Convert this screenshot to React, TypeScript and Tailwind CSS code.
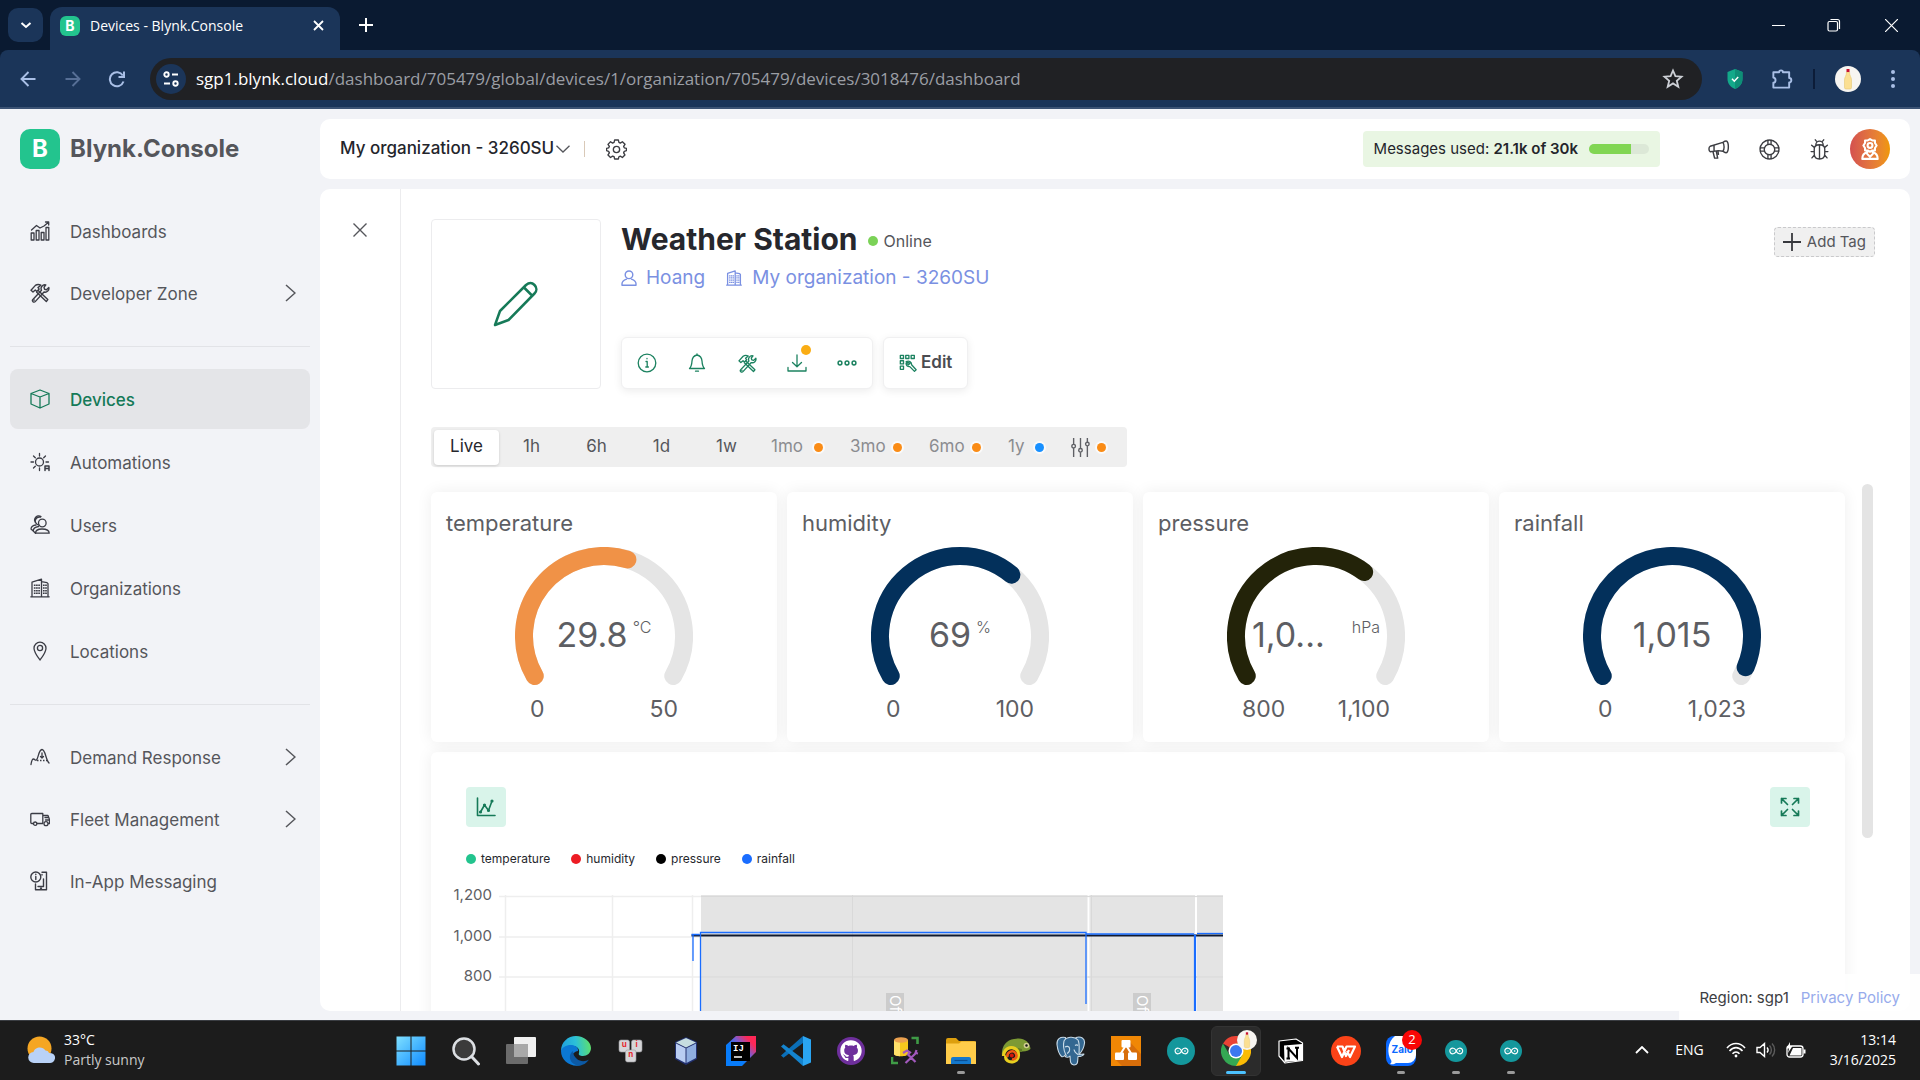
import React from "react";
import { FaGithub } from "react-icons/fa";
import { SiArduino } from "react-icons/si";

type IconProps = { className?: string; children: React.ReactNode; box?: number; stroke?: number };

function Line({ className = "size-5", children, box = 20, stroke = 1.3 }: IconProps) {
  return (
    <svg
      className={className}
      viewBox={`0 0 ${box} ${box}`}
      fill="none"
      stroke="currentColor"
      strokeWidth={stroke}
      strokeLinecap="round"
      strokeLinejoin="round"
      aria-hidden="true"
    >
      {children}
    </svg>
  );
}

const ToolsIcon = ({ className }: { className?: string }) => (
  <Line className={className} stroke={1.4}>
    <path d="M1 7.2 5.4 2.4C7 1.2 9 1.2 10.8 2.2L8 4.6l1.2 1.5-2.4 2.3L5.3 7 3 9z" />
    <path d="m8.2 7.4 9.6 9.2-1.5 1.9-9.6-9.2" />
    <path d="M18.8 4.4A3.8 3.8 0 0 1 14 9L5.2 18.6a1.5 1.5 0 0 1-2.3-2.1l8.6-9.2a3.8 3.8 0 0 1 4.3-5.4L14 4.2l.5 2 2 .5z" />
    <path d="m4 17.3.2-.2" />
  </Line>
);

const BuildingIcon = ({ className, stroke = 1.3 }: { className?: string; stroke?: number }) => (
  <Line className={className} stroke={stroke}>
    <path d="M.8 18.8h18.4M2 18.8V4.2l9.500-3v17.600M11.500 3.600 17 4.600l1 1v13.200" />
    <path strokeDasharray="1.500 1.200" strokeLinecap="butt" strokeWidth="1.700" d="M4.700 6.500V17M6.900 6.500V17M9.100 6.500V17M13.800 6.500V17M16 6.500V17" />
  </Line>
);

const DashboardsIcon = () => (
  <Line stroke={1.3}>
    <path d="M1.200 19v-7H4v7zM6.200 19V9.500H9V19zM11.200 19v-7.500H14V19zM16 19V6.500h2.800V19z" />
    <path d="m1.500 9 5-4.500 3.500 2.500 4-2L18.500 1.200M15.500 1h3.200v3" />
  </Line>
);

const CubeIcon = () => (
  <Line stroke={1.3}>
    <path d="M10 1 19 4.500v10.500L10 19l-9-4V4.500zM1 4.500 10 8l9-3.500M10 8v11" />
  </Line>
);

const AutomationsIcon = () => (
  <Line>
    <circle cx="9.500" cy="10" r="4" />
    <path d="M9.500 1.500v2.500M9.500 16v2.500M1 10h2.500M16 10h2.500M3.500 4l1.800 1.800M15.500 4l-1.800 1.800M3.500 16l1.800-1.800" />
    <path strokeWidth="1.500" d="M15 18.500v-4.500h4v4.500M15 16.500h4" />
  </Line>
);

const UsersIcon = () => (
  <Line stroke={1.3}>
    <circle cx="12.300" cy="8" r="3.800" />
    <path d="M9 10a4 4 0 1 1 1.500-7.800M6.500 8.500A4 4 0 1 1 11 1.500" />
    <path d="M19.200 18.200H5.500c0-3 2.500-4.200 6.500-4.200s7.200 1.200 7.200 4.200z" />
    <path d="M3.200 16c0-2.800 2-4 5.300-4.500M1 14c.2-2.300 2-3.700 5-4M1 14l2.200 2 2.300 2.200" />
  </Line>
);

const PinIcon = () => (
  <Line>
    <path d="M10 19C7 15 4 11.200 4 7.200a6 6 0 0 1 12 0C16 11.200 13 15 10 19z" />
    <circle cx="10" cy="7" r="2.600" />
  </Line>
);

const DemandIcon = () => (
  <Line>
    <path d="M1 17.500C1.500 14 2 12 3.500 12s1.500 1.800 3 1C8.500 11 8.500 3 12 2.500c3.500 0 3.500 10 7 13.500" />
    <path strokeDasharray="1.500 1.500" strokeLinecap="butt" d="M7 13.500h10" />
    <path d="M12 6v5M10.500 9.500 12 11l1.500-1.500" />
  </Line>
);

const FleetIcon = () => (
  <Line>
    <path d="M3.500 14.500H1.800a1 1 0 0 1-1-1v-8a1 1 0 0 1 1-1h11v10H7M12.800 6.500H18l1.500 4v4h-1" />
    <path d="M15 8.500h3.500M15.500 11h4" />
    <circle cx="5.200" cy="14.700" r="1.700" />
    <circle cx="16" cy="14.700" r="2" />
  </Line>
);

const InAppIcon = () => (
  <Line stroke={1.4}>
    <circle cx="5.800" cy="6" r="5" />
    <path d="M5.800 5.500v3M5.800 3.300v.2M12 1.200h4.500v17.600h-11V13M12 4v-.5M8 15.500h5.500V8M10.500 17.200h1" />
  </Line>
);

const Chevron = () => (
  <svg className="h-[18px] w-[11px]" viewBox="0 0 11 18" fill="none" stroke="#55565b" strokeWidth="1.500" aria-hidden="true">
    <path d="M1 1l9 8-9 8" />
  </svg>
);

type NavItem = { label: string; icon: React.ReactNode; expand?: boolean; active?: boolean };

const navGroups: { items: NavItem[]; style: string }[] = [
  {
    style: "flex flex-col gap-[2px]",
    items: [
      { label: "Dashboards", icon: <DashboardsIcon /> },
      { label: "Developer Zone", icon: <ToolsIcon className="size-5" />, expand: true },
    ],
  },
  {
    style: "mt-[23px] flex flex-col gap-[3px] border-t border-[#e2e3e7] pt-[22px]",
    items: [
      { label: "Devices", icon: <CubeIcon />, active: true },
      { label: "Automations", icon: <AutomationsIcon /> },
      { label: "Users", icon: <UsersIcon /> },
      { label: "Organizations", icon: <BuildingIcon className="size-5" /> },
      { label: "Locations", icon: <PinIcon /> },
    ],
  },
  {
    style: "mt-[23px] flex flex-col gap-[2px] border-t border-[#e2e3e7] pt-[22px]",
    items: [
      { label: "Demand Response", icon: <DemandIcon />, expand: true },
      { label: "Fleet Management", icon: <FleetIcon />, expand: true },
      { label: "In-App Messaging", icon: <InAppIcon /> },
    ],
  },
];

function TitleBar() {
  return (
    <div className="flex h-[50px] shrink-0 items-end bg-[#0a1a31] text-white">
      <button aria-label="Search tabs" className="mb-2 ml-2 flex h-[34px] w-[35px] items-center justify-center rounded-[10px] bg-[#1b3559]">
        <svg className="size-3" viewBox="0 0 12 12" fill="none" stroke="currentColor" strokeWidth="2" aria-hidden="true"><path d="m1.500 4 4.500 4 4.500-4" /></svg>
      </button>
      <div className="ml-[7px] flex h-[43px] w-[290px] items-center rounded-t-xl bg-[#1b3559] pr-3 pb-[6px] pl-[10px] font-['Open_Sans',sans-serif] text-sm">
        <span className="flex size-5 items-center justify-center rounded-md bg-[#23c48e] font-['Inter',sans-serif] text-sm font-bold">B</span>
        <span className="ml-[10px] flex-1">Devices - Blynk.Console</span>
        <button aria-label="Close tab" className="flex size-5 items-center justify-center">
          <svg className="size-[11px]" viewBox="0 0 11 11" stroke="currentColor" strokeWidth="1.800" aria-hidden="true"><path d="m1 1 9 9M10 1l-9 9" /></svg>
        </button>
      </div>
      <button aria-label="New tab" className="mb-[15px] ml-4 flex size-5 items-center justify-center">
        <svg className="size-[14px]" viewBox="0 0 14 14" stroke="currentColor" strokeWidth="2" aria-hidden="true"><path d="M7 0v14M0 7h14" /></svg>
      </button>
      <div className="ml-auto flex h-full items-center">
        <button aria-label="Minimize" className="flex h-full w-14 items-center justify-center">
          <span className="h-px w-[13px] bg-white" />
        </button>
        <button aria-label="Restore" className="flex h-full w-14 items-center justify-center">
          <svg className="size-[14px]" viewBox="0 0 14 14" fill="none" stroke="currentColor" strokeWidth="1.200" aria-hidden="true"><rect x="1" y="3.500" width="9.500" height="9.500" rx="1.500" /><path d="M3.500 1.500h7a2 2 0 0 1 2 2V11" /></svg>
        </button>
        <button aria-label="Close" className="flex h-full w-[58px] items-center justify-center">
          <svg className="size-[13px]" viewBox="0 0 13 13" stroke="currentColor" strokeWidth="1.200" aria-hidden="true"><path d="m0 0 13 13M13 0 0 13" /></svg>
        </button>
      </div>
    </div>
  );
}

const Bottle = ({ className }: { className?: string }) => (
  <svg className={className} viewBox="0 0 26 26" aria-hidden="true">
    <circle cx="13" cy="13" r="13" fill="#f7f5f1" />
    <path d="M11.500 6h3c0 4 2 5 2 8v7.500a1.500 1.500 0 0 1-1.500 1.500h-4a1.500 1.500 0 0 1-1.500-1.500V14c0-3 2-4 2-8z" fill="#fbdf92" stroke="#e6c873" strokeWidth=".6" />
    <rect x="11.500" y="3" width="3" height="3" fill="#c8102e" />
  </svg>
);

function AddressBar() {
  return (
    <div className="flex h-[59px] shrink-0 items-center rounded-t-lg border-b-2 border-[#3c5374] bg-[#1b3559] text-[#a9bfe6]">
      <button aria-label="Back" className="ml-4 flex size-6 items-center justify-center">
        <svg className="size-4" viewBox="0 0 16 16" fill="none" stroke="currentColor" strokeWidth="1.900" aria-hidden="true"><path d="M15.500 8h-14M8.500 1 1.500 8l7 7" /></svg>
      </button>
      <button aria-label="Forward" className="ml-[21px] flex size-6 items-center justify-center text-[#576f96]">
        <svg className="size-4" viewBox="0 0 16 16" fill="none" stroke="currentColor" strokeWidth="1.900" aria-hidden="true"><path d="M.5 8h14M7.500 1l7 7-7 7" /></svg>
      </button>
      <button aria-label="Reload" className="ml-5 flex size-6 items-center justify-center">
        <svg className="size-[18px]" viewBox="0 0 18 18" fill="none" stroke="currentColor" strokeWidth="2" aria-hidden="true"><path d="M15.500 11.500a7 7 0 1 1-.7-6M16 1.500V7h-5.500" /></svg>
      </button>
      <div className="ml-[21px] flex h-[42px] flex-1 items-center rounded-full bg-[#202124] pr-[18px] pl-[6px] font-['Open_Sans',sans-serif] text-[17px]">
        <button aria-label="Site information" className="flex size-[30px] items-center justify-center rounded-full bg-[#1b3559] text-white">
          <svg className="size-4" viewBox="0 0 16 16" fill="none" stroke="currentColor" strokeWidth="1.900" aria-hidden="true"><circle cx="3.500" cy="3.500" r="2.200" /><path d="M9 3.500h6M1 12.500h6" /><circle cx="12.500" cy="12.500" r="2.200" /></svg>
        </button>
        <span className="ml-[10px] flex-1 text-[#9b9ea4]">
          <span className="text-white">sgp1.blynk.cloud</span>/dashboard/705479/global/devices/1/organization/705479/devices/3018476/dashboard
        </span>
        <button aria-label="Bookmark">
          <svg className="size-[22px]" viewBox="0 0 22 22" fill="none" stroke="#cdd0d6" strokeWidth="1.800" aria-hidden="true"><path d="m11 2.500 2.400 5.700 6.100.5-4.700 4 1.500 6-5.300-3.300-5.300 3.300 1.500-6-4.700-4 6.100-.5z" /></svg>
        </button>
      </div>
      <button aria-label="Security extension" className="ml-[23px]">
        <svg className="h-5 w-5" viewBox="0 0 20 20" aria-hidden="true"><path d="m10 0 7.500 3v7c0 5-3.500 8.500-7.500 10-4-1.500-7.500-5-7.500-10V3z" fill="#13a98a" /><path d="m10 0 7.500 3v7c0 5-3.500 8.500-7.500 10z" fill="#0e8f77" /><path d="m7 9.800 2.300 2.400L13.200 8" fill="none" stroke="#fff" strokeWidth="1.500" /></svg>
      </button>
      <button aria-label="Extensions" className="ml-[25px]">
        <svg className="size-[23px]" viewBox="0 0 24 24" fill="none" stroke="currentColor" strokeWidth="2" strokeLinejoin="round" aria-hidden="true"><path d="M3.500 5.500h6a2 2 0 1 1 4 0h6.500v6a2 2 0 1 1 0 4.500v5.500H3.500v-5a2.800 2.800 0 0 0 0-5.500z" /></svg>
      </button>
      <span className="ml-5 h-5 w-[2px] bg-[#0c1c38]" />
      <button aria-label="Profile" className="ml-5"><Bottle className="size-[26px]" /></button>
      <button aria-label="Menu" className="mr-[15px] ml-5 flex w-6 flex-col items-center gap-[3px]">
        <span className="size-1 rounded-full bg-current" />
        <span className="size-1 rounded-full bg-current" />
        <span className="size-1 rounded-full bg-current" />
      </button>
    </div>
  );
}

function Sidebar() {
  return (
    <aside className="flex w-80 shrink-0 flex-col px-[10px] pt-5 text-[17px] text-[#55565b]">
      <a href="#home" className="ml-[10px] flex items-center gap-[10px]">
        <span className="flex size-10 items-center justify-center rounded-[10px] bg-[#23c48e] text-2xl font-bold text-white">B</span>
        <span className="text-2xl font-bold">Blynk.Console</span>
      </a>
      <nav className="mt-8 flex flex-col">
        {navGroups.map((group, i) => (
          <div key={i} className={group.style}>
            {group.items.map((item) => (
              <a
                key={item.label}
                href={"#" + item.label}
                className={
                  item.active
                    ? "flex h-[60px] items-center rounded-lg bg-[#e4e5e8] px-5 font-medium text-[#157a58]"
                    : "flex h-[60px] items-center rounded-lg pr-[14px] pl-5"
                }
              >
                <span className={item.active ? "text-[#157a58]" : "text-[#3b3c45]"}>{item.icon}</span>
                <span className="ml-5 flex-1 pt-[3px]">{item.label}</span>
                {item.expand && <Chevron />}
              </a>
            ))}
          </div>
        ))}
      </nav>
    </aside>
  );
}

function TopBar() {
  return (
    <header className="flex h-[60px] shrink-0 items-center rounded-[10px] bg-white px-5 text-[#24252b]">
      <button className="flex items-center text-[17px] font-medium">
        My organization - 3260SU
        <svg className="ml-[2px] h-2 w-[14px]" viewBox="0 0 14 8" fill="none" stroke="#55565b" strokeWidth="1.300" aria-hidden="true"><path d="m.5.800 6.500 6.200L13.500.8" /></svg>
      </button>
      <span className="ml-[14px] h-4 w-px bg-[#d9c9b8]" />
      <button aria-label="Settings" className="ml-[21px] text-[#3c3d42]">
        <Line className="size-[21px]">
          <circle cx="10" cy="10" r="3" />
          <path d="M8.200 1h3.600l.5 2.300 1.300.6 2-1.300 2.500 2.500-1.300 2 .6 1.300 2.100.5v2.200l-2.100.7-.6 1.400 1.200 2-2.400 2.400-2-1.300-1.300.6-.5 2.100H8.200l-.5-2.100-1.400-.6-2 1.300-2.400-2.400 1.300-2-.7-1.400L.5 11.100V8.900l2-.5.700-1.300-1.300-2 2.400-2.500 2 1.300 1.400-.6z" />
        </Line>
      </button>
      <div className="ml-auto flex h-9 items-center rounded bg-[#e9f6e3] px-[11px] text-[15px]">
        <span>Messages used: <span className="font-semibold">21.1k of 30k</span></span>
        <span className="ml-[11px] h-[10px] w-[60px] overflow-hidden rounded-full bg-[#dce8d7]">
          <span className="block h-full w-[70%] bg-[#81d653]" />
        </span>
      </div>
      <div className="ml-12 flex items-center gap-[29px] text-[#3c3d42]">
        <button aria-label="Announcements">
          <Line className="size-[22px]"><path d="M2 7.500 13.500 4c1.500-1 2.200-1.500 3.500-1.200 2 1.500 2 9 0 10.500-1.300.5-2-.4-3.500-1.300L9.500 11.500 2 12.500c-1.500-1-1.500-4 0-5zM4.500 12.300l1.500 6h2.800L7.500 12M9 11.800l.5 3M13.500 4c1.500 2 1.500 6.500 0 8M5.500 6.500v5.500" /></Line>
        </button>
        <button aria-label="Support">
          <Line className="size-[21px]"><circle cx="10" cy="10" r="9" /><circle cx="10" cy="10" r="5" /><path d="M8.500 1.200v4M11.500 1.200v4M8.500 14.800v4M11.500 14.800v4M1.200 8.500h4M1.200 11.500h4M14.800 8.500h4M14.800 11.500h4" /></Line>
        </button>
        <button aria-label="Report a bug">
          <Line className="size-[21px]"><path d="M6.500 5.500a3.500 3.500 0 0 1 7 0M5 9.500C5 7 6.500 5.500 10 5.500S15 7 15 9.500V14c0 3-2 5-5 5s-5-2-5-5zM10 5.500V19M5 8 2.500 6M15 8l2.500-2M5 12H2M15 12h3M5 15.500 2.800 18M15 15.500l2.200 2.500M7 2 6 .8M13 2l1-1.200" /></Line>
        </button>
        <button aria-label="Account" className="-ml-[9px] flex size-10 items-center justify-center rounded-full bg-linear-to-r from-[#d4504f] to-[#f09800] text-white">
          <Line className="size-[22px]" stroke={1.9}><circle cx="10" cy="6.800" r="2.200" /><path d="M10 1 12 2.200h2.500v2.300L16 6.800l-1.500 2.300v2.300H12L10 12.500 8 11.400H5.500V9.100L4 6.800l1.500-2.300V2.200H8zM3 19c0-4 2.500-5.500 4.500-6M17 19c0-4-2.500-5.500-4.500-6M3 19h14M7.500 14.500 10 17l2.500-2.500" /></Line>
        </button>
      </div>
    </header>
  );
}

function DeviceHeader() {
  return (
    <section className="flex items-start pr-[35px] pl-[30px]">
      <button aria-label="Edit picture" className="flex size-[170px] items-center justify-center rounded-[4px] border border-[#ececee] text-[#167a58]">
        <svg className="size-[46px]" viewBox="0 0 46 46" fill="none" stroke="currentColor" strokeWidth="2.500" strokeLinejoin="round" aria-hidden="true">
          <path d="m2 44 5-14L33 4c3-2.500 6-2.500 8.500 0s2.500 6 0 8.500L15.500 39zM31 6.500 39.500 15" />
        </svg>
      </button>
      <div className="ml-5 flex h-[170px] flex-col">
        <div className="flex h-10 items-center">
          <h1 className="text-[30px] font-bold text-[#26272d]">Weather Station</h1>
          <span className="mt-1 ml-[10px] size-[10px] rounded-full bg-[#7bd257]" />
          <span className="mt-1 ml-[6px] text-base text-[#55565b]">Online</span>
        </div>
        <div className="mt-[5px] flex items-center text-[19px] leading-7 text-[#7a90e2]">
          <Line className="size-4" box={16} stroke={1.4}><circle cx="8" cy="4.800" r="3.800" /><path d="M1 15.200v-1.500c0-2.500 2-3.500 4.500-4.500M15 15.200v-1.500c0-2.500-2-3.500-4.500-4.500M1 15.200h14" /></Line>
          <a href="#owner" className="ml-[9px]">Hoang</a>
          <BuildingIcon className="ml-[21px] size-4" stroke={1.6} />
          <a href="#organization" className="ml-[10px]">My organization - 3260SU</a>
        </div>
        <div className="mt-auto flex gap-[10px]">
          <div className="flex h-[52px] items-center gap-[10px] rounded-md border border-[#f0f0f1] bg-white px-[5px] text-[#1c8260] shadow-[0_2px_8px_rgba(0,0,0,0.08)]">
            <button aria-label="Info" className="flex size-10 items-center justify-center">
              <Line><circle cx="10" cy="10" r="8.800" /><path d="M9 8.500h1.200v5.500M8.800 14h2.600M10 5.500v.3" /></Line>
            </button>
            <button aria-label="Notifications" className="flex size-10 items-center justify-center">
              <Line><path d="M2.500 15.500h15c-2-2-2.300-4-2.500-7.500-.2-3-1.500-5.200-5-6-3.500.8-4.800 3-5 6-.2 3.500-.5 5.500-2.500 7.500zM8.500 18.200h3M10 .800V2" /></Line>
            </button>
            <button aria-label="Developer tools" className="flex size-10 items-center justify-center"><ToolsIcon className="size-[19px]" /></button>
            <button aria-label="Download" className="relative flex size-10 items-center justify-center">
              <Line><path d="M10 2v11.500M5.500 9.500l4.500 4.300 4.500-4.300M1 14.500V18h18v-3.500" /></Line>
              <span className="absolute top-[2px] right-[6px] size-[10px] rounded-full bg-[#faad14]" />
            </button>
            <button aria-label="More" className="flex size-10 items-center justify-center">
              <Line stroke={1.5}><circle cx="3" cy="10" r="1.900" /><circle cx="10" cy="10" r="1.900" /><circle cx="17" cy="10" r="1.900" /></Line>
            </button>
          </div>
          <button className="flex h-[52px] items-center rounded-md border border-[#f0f0f1] bg-white px-[15px] text-[#4b4c51] shadow-[0_2px_8px_rgba(0,0,0,0.08)]">
            <span className="text-[#1c8260]">
              <Line className="size-[18px]" stroke={1.5}><path d="M1.500 1.500h3.500V5H1.500zM7.500 1.500H11V5H7.500zM13.500 1.500H17V5h-3.500zM1.500 7.500h3.500V11H1.500zM1.500 13.500h3.500V17H1.500zM8 8.500c3-1.500 6 0 6 3.500l5 5.500-1.800 1.800-5.200-5.300c-2.500.3-4.500-1.500-4-4l2.500 2 1.500-1.500z" /></Line>
            </span>
            <span className="ml-1 text-[17px] font-semibold">Edit</span>
          </button>
        </div>
      </div>
      <button className="mt-2 ml-auto flex h-[30px] items-center rounded border border-dashed border-[#c9c9cb] bg-[#f0f0f0] px-2 text-[15px] text-[#55565b]">
        <svg className="mr-[6px] size-[18px]" viewBox="0 0 18 18" stroke="#37383d" strokeWidth="1.800" aria-hidden="true"><path d="M9 0v18M0 9h18" /></svg>
        Add Tag
      </button>
    </section>
  );
}

const lockedRanges = [
  { label: "1mo", text: "w-[37px] text-left", dot: "size-[9px] rounded-full bg-[#fa8c16] ring-2 ring-white/70" },
  { label: "3mo", text: "w-[37px] text-left", dot: "size-[9px] rounded-full bg-[#fa8c16] ring-2 ring-white/70" },
  { label: "6mo", text: "w-[37px] text-left", dot: "size-[9px] rounded-full bg-[#fa8c16] ring-2 ring-white/70" },
  { label: "1y", text: "w-[21px] text-left", dot: "size-[9px] rounded-full bg-[#1890ff] ring-2 ring-white/70" },
];

function RangeBar() {
  return (
    <div className="mt-[38px] ml-[30px] flex h-10 w-fit items-center rounded bg-[#efefef] pr-[21px] pl-[3px] text-[17px] text-[#55565b]">
      <button className="h-[35px] w-[65px] rounded bg-white text-[#26272d] shadow-[0_1px_3px_rgba(0,0,0,0.15)]">Live</button>
      {["1h", "6h", "1d", "1w"].map((r) => (
        <button key={r} className="h-[35px] w-[65px]">{r}</button>
      ))}
      <div className="ml-3 flex items-center gap-[27px] text-[#8b8c90]">
        {lockedRanges.map((r) => (
          <button key={r.label} className="flex items-center gap-[6px]">
            <span className={r.text}>{r.label}</span>
            <span className={r.dot} />
          </button>
        ))}
        <button aria-label="Custom range" className="flex items-center gap-[7px]">
          <svg className="size-[19px]" viewBox="0 0 18 18" fill="none" stroke="#5f6065" strokeWidth="1.300" aria-hidden="true">
            <path d="M2.500 0v6M2.500 9.500V18M9 0v10M9 13.500V18M15.500 0v4M15.500 7.500V18" />
            <circle cx="2.500" cy="7.700" r="1.700" /><circle cx="9" cy="11.700" r="1.700" /><circle cx="15.500" cy="5.700" r="1.700" />
          </svg>
          <span className="size-[9px] rounded-full bg-[#fa8c16] ring-2 ring-white/70" />
        </button>
      </div>
    </div>
  );
}

function arc(sweep: number) {
  const c = 89;
  const r = 80;
  const point = (deg: number) => {
    const a = (deg * Math.PI) / 180;
    return `${(c + r * Math.cos(a)).toFixed(2)} ${(c + r * Math.sin(a)).toFixed(2)}`;
  };
  return `M${point(150)}A${r} ${r} 0 ${sweep > 180 ? 1 : 0} 1 ${point(150 + sweep)}`;
}

type Gauge = { name: string; value: string; unit?: string; min: string; max: string; color: string; sweep: number; clipped?: boolean };

const gauges: Gauge[] = [
  { name: "temperature", value: "29.8", unit: "°C", min: "0", max: "50", color: "#f09247", sweep: 137 },
  { name: "humidity", value: "69", unit: "%", min: "0", max: "100", color: "#03305b", sweep: 160 },
  { name: "pressure", value: "1,0...", unit: "hPa", min: "800", max: "1,100", color: "#232309", sweep: 157, clipped: true },
  { name: "rainfall", value: "1,015", min: "0", max: "1,023", color: "#03305b", sweep: 233 },
];

function GaugeCard({ g }: { g: Gauge }) {
  return (
    <article className="flex h-[250px] flex-col items-center rounded-md bg-white px-[15px] pt-[15px] text-[#5d5e63] shadow-[0_0_16px_rgba(0,0,0,0.07)]">
      <h2 className="w-full text-[22px] leading-8">{g.name}</h2>
      <div className="relative mt-2 h-[140px] w-[178px]">
        <svg className="h-[140px] w-[178px]" viewBox="0 0 178 140" fill="none" strokeWidth="18" strokeLinecap="round" aria-hidden="true">
          <path d={arc(240)} stroke="#e5e5e5" />
          <path d={arc(g.sweep)} stroke={g.color} />
        </svg>
        <div className={g.clipped ? "absolute inset-x-[25px] top-[68px] flex items-start justify-between" : "absolute inset-x-0 top-[68px] flex items-start justify-center gap-[5px]"}>
          <span className="text-[34px] leading-[40px]">{g.value}</span>
          {g.unit && <span className="text-base leading-6 font-light">{g.unit}</span>}
        </div>
      </div>
      <div className="mt-[6px] flex w-[148px] justify-between text-[23px] leading-8">
        <span>{g.min}</span>
        <span>{g.max}</span>
      </div>
    </article>
  );
}

const series = [
  { name: "temperature", dot: "size-[10px] rounded-full bg-[#23c48e]" },
  { name: "humidity", dot: "size-[10px] rounded-full bg-[#ed1c24]" },
  { name: "pressure", dot: "size-[10px] rounded-full bg-black" },
  { name: "rainfall", dot: "size-[10px] rounded-full bg-[#1a6dff]" },
];

function HistoryChart() {
  return (
    <svg className="mt-[11px] block h-[200px] w-[800px]" viewBox="0 0 800 200" role="img" aria-label="Sensor history">
      <g stroke="#eeeeee" strokeWidth="1.500">
        <path d="M68 16.500h724M68 57h724M68 97h724" />
        <path d="M74.500 15v185M181.500 15v185M261.500 15v185" />
      </g>
      <g fill="#e4e4e4">
        <rect x="270" y="15" width="386.500" height="185" />
        <rect x="658.500" y="15" width="105.500" height="185" />
        <rect x="766" y="15" width="26" height="185" />
      </g>
      <path d="M421.500 15v185M660.500 15v185M270 16.500h522M270 97h522" stroke="#d9d9d9" />
      <g fill="#5d5e63" fontSize="15" fontFamily="Inter, sans-serif" textAnchor="end">
        <text x="61" y="20">1,200</text>
        <text x="61" y="61">1,000</text>
        <text x="61" y="101">800</text>
      </g>
      <path d="M260.500 55.500H792" stroke="#101a30" strokeWidth="2" />
      <g fill="none" stroke="#1a6dff">
        <path d="M260.500 54.500h8M262 54v27M269.500 200V52.500H655V124M655 52v2h108" strokeWidth="1.300" />
        <path d="M764 54.500V200" strokeWidth="2.200" />
        <path d="M766 53.500h26" strokeWidth="1.300" />
      </g>
      {[455, 702].map((x) => (
        <g key={x}>
          <rect x={x} y="113" width="18" height="60" fill="#cccccc" />
          <text transform={`translate(${x + 4} 115) rotate(90)`} fill="#fff" fontSize="15" fontFamily="Inter, sans-serif">Offline</text>
        </g>
      ))}
    </svg>
  );
}

function ChartCard() {
  return (
    <article className="mt-[10px] rounded-md bg-white pt-[35px] shadow-[0_0_16px_rgba(0,0,0,0.07)]">
      <div className="flex justify-between px-[35px] text-[#167a58]">
        <button aria-label="Chart type" className="flex size-10 items-center justify-center rounded bg-[#d9f4ea]">
          <Line stroke={1.6}><path d="M1.500 1v17.500H19M4.500 15 8.500 8l4 5.500L16 4" /><circle cx="4.500" cy="15" r=".8" /><circle cx="8.500" cy="8" r=".8" /><circle cx="12.500" cy="13.500" r=".8" /><circle cx="16" cy="4" r=".8" /></Line>
        </button>
        <button aria-label="Full screen" className="flex size-10 items-center justify-center rounded bg-[#d9f4ea]">
          <Line stroke={1.7}><path d="M1.500 6V1.500H6M1.500 1.500l6 6M14 1.500h4.500V6M18.500 1.500l-6 6M1.500 14v4.500H6M1.500 18.500l6-6M18.500 14v4.500H14M18.500 18.500l-6-6" /></Line>
        </button>
      </div>
      <ul className="mt-[22px] flex h-5 items-center gap-[21px] pl-[35px] text-xs text-[#26272d]">
        {series.map((s) => (
          <li key={s.name} className="flex items-center gap-[5px]">
            <span className={s.dot} />
            {s.name}
          </li>
        ))}
      </ul>
      <HistoryChart />
    </article>
  );
}

function Main() {
  return (
    <main className="relative flex min-w-0 flex-1 flex-col gap-[10px] pt-[10px] pr-[10px] pb-[9px]">
      <TopBar />
      <div className="flex min-h-0 flex-1 overflow-hidden rounded-[10px] bg-white">
        <div className="flex w-[81px] shrink-0 justify-center border-r border-[#ececee] pt-[33px]">
          <button aria-label="Close device" className="h-4">
            <svg className="size-[14px]" viewBox="0 0 14 14" stroke="#55565b" strokeWidth="1.400" aria-hidden="true"><path d="m.5.5 13 13M13.500.5l-13 13" /></svg>
          </button>
        </div>
        <div className="flex min-w-0 flex-1 flex-col pt-[30px]">
          <DeviceHeader />
          <RangeBar />
          <div className="mt-2 flex min-h-0 flex-1">
            <div className="min-w-0 flex-1 overflow-hidden pt-[17px] pr-[17px] pl-[30px]">
              <div className="grid grid-cols-4 gap-[10px]">
                {gauges.map((g) => <GaugeCard key={g.name} g={g} />)}
              </div>
              <ChartCard />
            </div>
            <div className="mt-[9px] mr-[37px] h-[66%] w-[11px] rounded-full bg-[#e4e4e4]" />
          </div>
        </div>
      </div>
      <footer className="absolute right-0 bottom-0 flex h-[46px] gap-3 bg-white/90 pt-[13px] pr-5 pl-5 text-[15px] text-[#3c3d42]">
        <span>Region: sgp1</span>
        <a href="#privacy" className="text-[#97abec]">Privacy Policy</a>
      </footer>
    </main>
  );
}

const Arduino = ({ className }: { className: string }) => (
  <span className={className}><SiArduino className="w-3/4" /></span>
);

const ChromeLogo = () => (
  <svg className="size-[30px]" viewBox="0 0 30 30" aria-hidden="true">
    <path d="M15 15 2 7.500A15 15 0 0 1 28 7.500H15z" fill="#ea4335" />
    <path d="M15 15 15 7.500H28A15 15 0 0 1 15 30z" fill="#fbbc05" />
    <path d="M15 15 21.500 18.700 15 30A15 15 0 0 1 2 7.500L8.500 18.700z" fill="#34a853" />
    <circle cx="15" cy="15" r="7.500" fill="#fff" />
    <circle cx="15" cy="15" r="6" fill="#3b78f0" />
  </svg>
);

type TaskbarApp = { name: string; icon: React.ReactNode; mark?: "open" | "active" };

const apps: TaskbarApp[] = [
  { name: "Start", icon: <svg className="size-[30px]" viewBox="0 0 30 30"><defs><linearGradient id="win" x1="0" y1="0" x2="1" y2="1"><stop offset="0" stopColor="#7fe0ff" /><stop offset="1" stopColor="#0f8bff" /></linearGradient></defs><path fill="url(#win)" d="M.5.5h14v14H.5zM15.500.5h14v14h-14zM.5 15.500h14v14H.5zM15.500 15.500h14v14h-14z" /></svg> },
  { name: "Search", icon: <svg className="size-[30px]" viewBox="0 0 30 30" fill="#3b3b3b" stroke="#dcdfe3" strokeWidth="2.500"><circle cx="13" cy="13" r="10.500" /><path d="m20.500 20.500 7 7.500" strokeLinecap="round" strokeWidth="3" /></svg> },
  { name: "Task View", icon: <svg className="size-[30px]" viewBox="0 0 30 30"><rect x="8" y="1" width="22" height="20" rx="1" fill="#f0f0f0" /><rect x="0" y="8" width="22" height="20" rx="1" fill="#6b6b6b" /><rect x="8" y="8" width="14" height="13" fill="#a9a9a9" /></svg> },
  { name: "Edge", icon: <svg className="size-[30px]" viewBox="0 0 30 30"><defs><linearGradient id="edge" x1="0" y1=".5" x2="1" y2=".4"><stop offset="0" stopColor="#1f9fdd" /><stop offset=".5" stopColor="#2cc0d8" /><stop offset="1" stopColor="#5fe06a" /></linearGradient></defs><path d="M0 15C0 6 7 0 15 0s15 6 15 12c0 5-4 8-8 8-3 0-5-1-4-3 1-4-2-7-6-7-6 0-9 3-12 5z" fill="url(#edge)" /><path d="M0 15c1-4 6-6.500 11-6 4 .5 6.500 3 6 6-5 1-8 5-5 10 2 3 5 4.500 9 4C10 32 0 25 0 15z" fill="#0b78d4" /><path d="M12 15c-4 3-4 8-1 11.500 5 5 13 3.500 17-3-4 2.500-9 2-12-.5-2.500-2-4-5-4-8z" fill="#0c59a4" /></svg> },
  { name: "UniKey", icon: <svg className="size-[30px]" viewBox="0 0 30 30"><g fill="#d5d5d8" stroke="#9a9a9e" strokeWidth=".6"><rect x="3" y="4" width="10.500" height="12" rx="2" /><rect x="15.500" y="4" width="10.500" height="12" rx="2" /><rect x="9.500" y="14" width="10.500" height="12" rx="2" /></g><g fill="#e5272c" fontSize="8" fontWeight="700" fontFamily="Inter, sans-serif" textAnchor="middle"><text x="8.200" y="11">u</text><text x="20.700" y="11">i</text><text x="14.700" y="21">n</text></g></svg> },
  { name: "VirtualBox", icon: <svg className="size-[30px]" viewBox="0 0 30 30"><path d="m15 1 11 5v17l-11 6-11-6V6z" fill="#22306e" /><path d="m15 2 10 4.500-10 5-10-5z" fill="#c6dde0" /><path d="m5 7.500 9.500 4.800V27L5 22z" fill="#b9cdf2" /><path d="m25 7.500-9.500 4.800V27l9.500-5z" fill="#8faee0" /></svg> },
  { name: "IntelliJ IDEA", icon: <svg className="size-[30px]" viewBox="0 0 30 30"><defs><linearGradient id="ij" x1=".1" y1=".8" x2=".9" y2=".1"><stop offset=".3" stopColor="#087cfa" /><stop offset=".6" stopColor="#7b5bd0" /><stop offset=".9" stopColor="#fe2857" /></linearGradient></defs><path d="M10 0h20v16L16 30H0V9z" fill="url(#ij)" /><rect x="5" y="6" width="19" height="19" fill="#000" /><path d="M8 21h8" stroke="#fff" strokeWidth="1.500" /><text x="7" y="15" fill="#fff" fontSize="9" fontWeight="700" fontFamily="'Liberation Mono', monospace">IJ</text></svg> },
  { name: "Visual Studio Code", icon: <svg className="size-[30px]" viewBox="0 0 30 30"><path d="m0 19.500 2.500 2.200L22 7V0z" fill="#0b6fb8" /><path d="M0 10.500 2.500 8.300 22 23v7z" fill="#1484cf" /><path d="m22 0 8 3.500v23L22 30z" fill="#2aa5f2" /></svg> },
  { name: "GitHub Desktop", icon: <span className="flex size-7 items-center justify-center rounded-full bg-[#6e2f9c] text-white"><FaGithub className="size-[22px]" /></span> },
  { name: "Database tools", icon: <svg className="size-[30px]" viewBox="0 0 30 30"><path d="M3 4v14c0 3 14 3 14 0V4z" fill="#f7c91d" /><path d="M3 4v14c0 1.200 2.500 2 6 2.200V4z" fill="#ffe06a" /><ellipse cx="10" cy="4" rx="7" ry="2.800" fill="#eba14f" /><path d="M20.500 2h6v6M1 21v6h6" fill="none" stroke="#3f9b46" strokeWidth="2.600" /><path d="m12 17 4-2.500 3 2-2 2 7.500 7.500M25.500 14l-1 3 2.500.5M24.500 17.500 14.500 27" fill="none" stroke="#a259bd" strokeWidth="2.200" /></svg> },
  { name: "File Explorer", icon: <svg className="size-[30px]" viewBox="0 0 30 30"><path d="M0 4a2 2 0 0 1 2-2h8l3 3h15a2 2 0 0 1 2 2v3H0z" fill="#dd9f0e" /><path d="M0 7.500h13l2.500-2H30V28H0z" fill="#ffcc4a" /><path d="M5 28v-5a2 2 0 0 1 2-2h16a2 2 0 0 1 2 2v5z" fill="#1478cc" /><path d="M8.500 24.500h13" stroke="#0a4f94" strokeWidth="1.200" /></svg>, mark: "open" },
  { name: "Chameleon", icon: <svg className="size-[30px]" viewBox="0 0 30 30"><path d="M1 20C0 11 5 4 13 3c5-1 9-1 13 2.500 2 2.500 3.500 5.500 3.500 7.500-3 2.500-7 2.500-11 2.500L9 12z" fill="#7c9a34" /><path d="M17 12v4h4v-3z" fill="#5f7c26" /><path d="M2.500 20C3 13 9 10 14 12.500c5 3 4.500 11-1 13C8 27 3.500 24 5 19.500" fill="none" stroke="#e8cf1f" strokeWidth="3.200" /><path d="M6.500 21c-1-5 5-7.500 8-4 2.500 3.500-.5 7-3.500 6" fill="none" stroke="#ef5a14" strokeWidth="2.600" /><circle cx="10.800" cy="19.500" r="2" fill="#d3160c" /><circle cx="25.500" cy="9.500" r="2.800" fill="#d2cf92" /><circle cx="25.500" cy="9.500" r="1.200" fill="#1c1c1c" /></svg> },
  { name: "PostgreSQL", icon: <svg className="size-[30px]" viewBox="0 0 30 30" fill="#336791" stroke="#c9dbe8" strokeWidth="1.100" strokeLinejoin="round"><path d="M9.500 1.500C4 .500.5 3 1 8.500c.5 4.500 2 9.500 4.500 12 1.500 1 3-.5 5-3z" /><path d="M20 1.500c5-1.500 9 1 8.500 5.500-.5 5-3 9-5.500 11.500l-3-1z" /><path d="M9.500 18c-2-4.500-2.500-9-1.500-13C10 1 18-.5 22 4c2 4 1 9 1 14.500l5-.5c-1 2-3.500 2.500-6 2.500-.5 4 .5 8.500-4 8.500-4.500-.5-3.500-5-4-9-1 1.500-3.500 1.500-5 .5 1.500-.5 1.500-1 .5-2.500z" /><path d="M9 11c1.500-1 4-1 4.500 1 .5 3-.5 4.500-2.500 5.500M19 9.500c1-.8 2.200-.8 3 0M18 13.500c.5 2.500 2 4 4.500 5.500" fill="none" /></svg> },
  { name: "draw.io", icon: <svg className="size-[30px]" viewBox="0 0 30 30"><rect width="30" height="30" fill="#f08705" /><path d="m18 5 12 13v12H11l-6-6z" fill="#d86e0a" /><path d="M15 9 9 19M15 9l6 10" stroke="#fff" strokeWidth="2" /><g fill="#fff"><rect x="10.500" y="4" width="9" height="7.500" rx="1" /><rect x="4" y="16.500" width="9" height="7.500" rx="1" /><rect x="17" y="16.500" width="9" height="7.500" rx="1" /></g></svg> },
  { name: "Arduino", icon: <Arduino className="flex size-7 items-center justify-center rounded-full bg-[#14979c] text-white" /> },
  { name: "Chrome", icon: <span className="relative flex h-[50px] w-[50px] items-center justify-center rounded-md border border-[#333] bg-[#2b2b2b]"><ChromeLogo /><Bottle className="absolute top-[3px] right-[3px] size-5" /></span>, mark: "active" },
  { name: "Notion", icon: <svg className="size-[26px]" viewBox="0 0 26 26"><path d="m1 3 17-2 6.500 4v17.500L7 25 1 18z" fill="#000" stroke="#fff" strokeWidth="1.200" strokeLinejoin="round" /><path d="m6 7.500 18-1.500v16.500L6.500 24z" fill="#fff" /><path d="M10.500 20.500v-10l8.500 9.500V9.500M8.500 10.500h3.500M17 9.800h4M8.500 20.500h3.500" stroke="#000" strokeWidth="2" fill="none" /></svg> },
  { name: "WPS Office", icon: <svg className="size-[30px]" viewBox="0 0 30 30"><circle cx="15" cy="15" r="15" fill="#fb4318" /><path d="M6 10.500h5.500L15 20l3-6M6 10.500 11 21l4.500-10.500H24L19 21l-3-6" fill="none" stroke="#fff" strokeWidth="2.200" strokeLinejoin="round" /></svg> },
  { name: "Zalo", icon: <span className="relative"><svg className="size-[30px]" viewBox="0 0 30 30"><rect width="30" height="30" rx="8" fill="#0a68ff" /><path d="M9 0h13a8 8 0 0 1 8 8v11a8 8 0 0 1-8 8H10c-2 1.500-4 1.500-6 1 2-1.500 1.500-3 1-4C1 18 1 6 9 0z" fill="#fff" /><text x="5.500" y="17" fill="#0a68ff" fontSize="10" fontWeight="700" fontFamily="Inter, sans-serif">Zalo</text></svg><span className="absolute -top-[6px] -right-[6px] flex size-5 items-center justify-center rounded-full bg-[#f90606] font-['Open_Sans',sans-serif] text-[13px] text-white">2</span></span>, mark: "open" },
  { name: "Arduino IDE 1", icon: <Arduino className="flex size-[22px] items-center justify-center rounded-full bg-[#14979c] text-white" />, mark: "open" },
  { name: "Arduino IDE 2", icon: <Arduino className="flex size-[22px] items-center justify-center rounded-full bg-[#14979c] text-white" />, mark: "open" },
];

function Taskbar() {
  return (
    <div className="grid h-[60px] shrink-0 grid-cols-[1fr_auto_1fr] items-center border-t border-[#3a3d42] bg-[#1c1c1c] font-['Open_Sans',sans-serif] text-sm text-white">
      <button className="flex items-center pb-[2px] pl-[27px] text-left leading-5">
        <svg className="size-7" viewBox="0 0 28 28" aria-hidden="true">
          <circle cx="12.500" cy="12.500" r="12" fill="#f5a623" />
          <path d="M7 27a5.500 5.500 0 0 1-.5-11c1-5 9-6.500 12-1.500 1.500 0 3 .8 3.500 2.500 5 0 6.500 3 6 5.500-.5 3-3 4.500-5 4.500z" fill="#b9d2f7" />
        </svg>
        <span className="ml-[9px] flex flex-col">
          <span>33°C</span>
          <span className="text-[#c9c9c9]">Partly sunny</span>
        </span>
      </button>
      <div className="flex h-full pl-[2px]">
        {apps.map((app) => (
          <button key={app.name} aria-label={app.name} className="relative flex h-full w-[55px] items-center justify-center">
            {app.icon}
            {app.mark === "open" && <span className="absolute bottom-[6px] h-[3px] w-2 rounded-full bg-[#9a9a9a]" />}
            {app.mark === "active" && <span className="absolute bottom-[6px] h-[3px] w-5 rounded-full bg-[#4cc2ff]" />}
          </button>
        ))}
      </div>
      <div className="flex items-center justify-end pr-6 pb-[2px]">
        <button aria-label="Hidden icons"><svg className="h-2 w-[14px]" viewBox="0 0 14 8" fill="none" stroke="#fff" strokeWidth="1.800" aria-hidden="true"><path d="m1 7 6-6 6 6" /></svg></button>
        <span className="ml-[26px]">ENG</span>
        <svg className="ml-[22px] h-4 w-5" viewBox="0 0 20 16" fill="none" stroke="#fff" strokeWidth="1.600" aria-hidden="true"><path d="M1 6c5-6 13-6 18 0M3.500 9c4-4.500 9-4.500 13 0M6.500 11.800c2-2.500 5-2.500 7 0" /><circle cx="10" cy="14" r="1.400" fill="#fff" stroke="none" /></svg>
        <svg className="ml-[10px] h-4 w-5" viewBox="0 0 20 16" fill="none" stroke="#fff" strokeWidth="1.400" aria-hidden="true"><path d="M1 5.500h3L8.500 1.500v13L4 10.500H1zM11 5.500c1.300 1.500 1.300 3.500 0 5" /><path d="M13.500 3.500c2.500 2.500 2.500 6.500 0 9M16 1.500c3.500 3.500 3.500 9.500 0 13" stroke="#5c5c5c" /></svg>
        <svg className="ml-[10px] h-4 w-5" viewBox="0 0 20 16" aria-hidden="true"><rect x="1" y="4" width="16" height="11" rx="2.500" fill="none" stroke="#fff" strokeWidth="1.300" /><path d="M7 6h8.500v7.500h-12zM17.500 7.500h2v4h-2zM4 0 .5 6.500h2.500L2 11l4.500-7H4z" fill="#fff" /></svg>
        <span className="ml-6 flex flex-col text-right leading-5">
          <span>13:14</span>
          <span>3/16/2025</span>
        </span>
      </div>
    </div>
  );
}

export default function App() {
  return (
    <div className="flex h-screen flex-col overflow-hidden bg-[#0a1a31] font-['Inter',sans-serif]">
      <TitleBar />
      <AddressBar />
      <div className="flex min-h-0 flex-1 bg-[#f2f3f7]">
        <Sidebar />
        <Main />
      </div>
      <Taskbar />
    </div>
  );
}
